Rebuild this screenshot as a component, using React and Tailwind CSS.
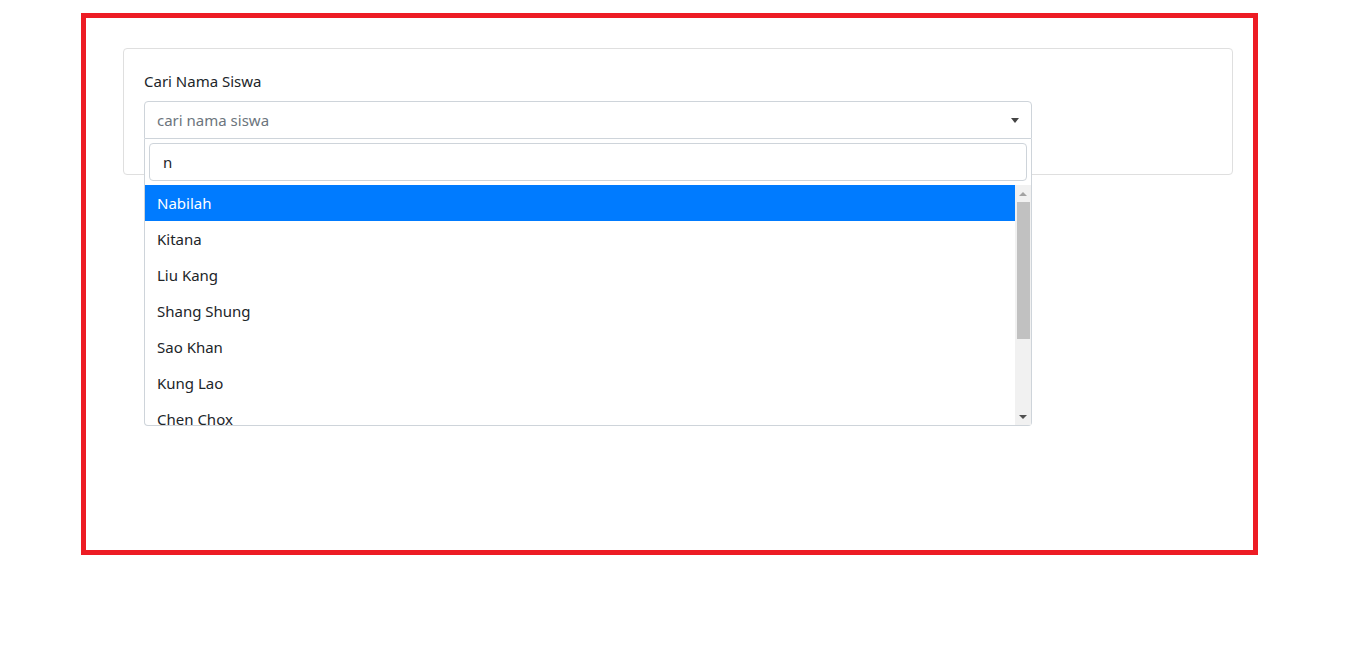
import React from 'react';

const SISWA = ['Nabilah', 'Kitana', 'Liu Kang', 'Shang Shung', 'Sao Khan', 'Kung Lao', 'Chen Chox'];

export default function App() {
  return (
    <div className="min-h-screen bg-white pt-[13px] pl-[81px] text-[15px] text-[#212529] font-['Noto_Sans',sans-serif]">
      <div className="w-[1177px] h-[542px] border-[5px] border-[#ed1c24] pt-[30px] pl-[37px] pr-[20px]">
        {/* card */}
        <div className="border border-[#dfdfdf] rounded p-5 h-[127px]">
          <label className="block leading-6 mb-2">Cari Nama Siswa</label>
          <div className="relative w-[888px]">
            <div className="h-[38px] border border-[#ced4da] rounded-t flex items-center pl-3 pr-2">
              <span className="flex-1 text-[#6c757d]">cari nama siswa</span>
              <span className="w-0 h-0 border-x-4 border-x-transparent border-t-[5px] border-t-[#444] mr-[4px]"></span>
            </div>

            {/* dropdown */}
            <div className="absolute top-full left-0 w-full bg-white border border-t-0 border-[#ced4da] rounded-b-sm z-10">
              <div className="p-1">
                <div className="h-[38px] border border-[#ced4da] rounded flex items-center px-[13px]">n</div>
              </div>
              <div className="flex h-[240px]">
                <ul className="flex-1 overflow-hidden">
                  {SISWA.map((nama, i) => (
                    <li
                      key={nama}
                      className={i === 0 ? 'h-9 flex items-center px-3 bg-[#007bff] text-white' : 'h-9 flex items-center px-3'}
                    >
                      {nama}
                    </li>
                  ))}
                </ul>
                {/* scrollbar */}
                <div className="w-[16px] bg-[#f1f1f1] flex flex-col items-center">
                  <div className="h-[17px] flex items-center justify-center">
                    <span className="w-0 h-0 border-x-[4px] border-x-transparent border-b-[4px] border-b-[#a3a3a3]"></span>
                  </div>
                  <div className="w-[13px] h-[137px] bg-[#c1c1c1]"></div>
                  <div className="flex-1"></div>
                  <div className="h-[17px] flex items-center justify-center">
                    <span className="w-0 h-0 border-x-[4px] border-x-transparent border-t-[4px] border-t-[#505050]"></span>
                  </div>
                </div>
              </div>
            </div>
          </div>
        </div>
      </div>
    </div>
  );
}
